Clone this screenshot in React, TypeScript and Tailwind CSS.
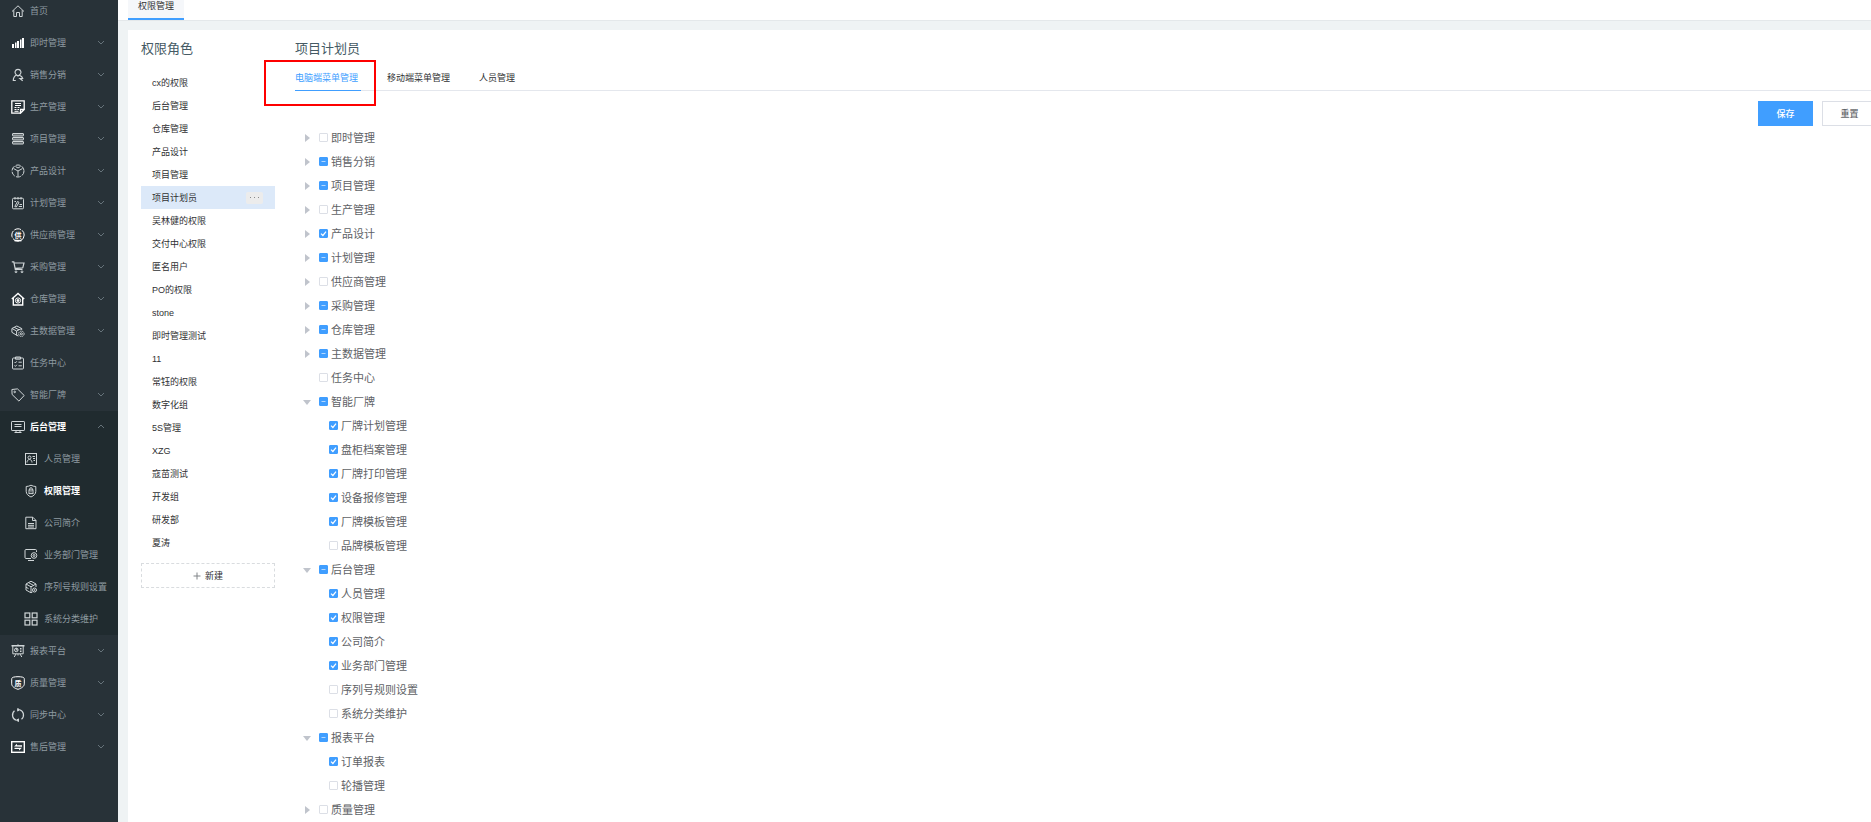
import { useEffect, useRef, useState, type ReactNode } from "react";

type IconName =
  | "home" | "bars" | "person" | "production" | "server" | "cube" | "plan" | "supplier"
  | "cart" | "warehouse" | "data" | "task" | "tag" | "monitor" | "idcard" | "shield"
  | "doc" | "dept" | "serial" | "grid" | "board" | "quality" | "sync" | "service";

const drawings: Record<IconName, ReactNode> = {
  home: (
    <path d="M1 7.500 7 1.800l6 5.700M2.800 6.200V12.500h2.700V8.500h3v4h2.700V6.200" />
  ),
  bars: (
    <g fill="currentColor" stroke="none">
      <rect x="1" y="8" width="2" height="4" />
      <rect x="4" y="6.500" width="1.500" height="5.500" />
      <rect x="6" y="5" width="2" height="7" />
      <rect x="9" y="3.500" width="1.500" height="8.500" />
      <rect x="11" y="2" width="2" height="10" />
    </g>
  ),
  person: (
    <path strokeWidth="1.200" d="M7 1.300a3 3 0 0 1 1.800 5.400L7 8 5.200 6.700A3 3 0 0 1 7 1.300ZM5.500 7C3.500 8 2.300 9.800 2.300 12.500h2.500M8.600 7.200c1.600.8 2.700 1.800 3.100 3.300H9l2.700 2.200" />
  ),
  production: (
    <>
      <path strokeWidth="1.300" d="M13.200 9V.8H.8v12.400H9M13.200 9.500 9.500 13.200V9.500Z" />
      <path d="M4 3.500h6M4 5.500h6M3.500 7.500h2M6.500 7.500h2M3.500 9.500h2M6.500 9.500h1.500M3.500 11.300h4" />
    </>
  ),
  server: (
    <>
      <g fill="currentColor" fillOpacity=".35">
        <rect x="1.500" y="1.500" width="11" height="2.500" rx=".5" />
        <rect x="1.500" y="5.500" width="11" height="2.500" rx=".5" />
        <rect x="1.500" y="9.500" width="11" height="2.500" rx=".5" />
      </g>
    </>
  ),
  cube: (
    <>
      <circle cx="7" cy="7" r="6" strokeDasharray="5 1.300" />
      <path d="M7 7v5.500M7 7 2.500 4.500M7 7l4.500-2.500M4.500 2.500 7 4l2.500-1.500" />
    </>
  ),
  plan: (
    <>
      <rect x="1.500" y="2.300" width="11" height="10.500" rx="1" />
      <path d="M4 1v2.500M7 1v2.500M10 1v2.500M3.800 10.500 6.500 5.500 8 6.300 5.300 11ZM8.500 8.500h2.500M7.800 10.500H11M3.500 5.500h1.500" />
    </>
  ),
  supplier: (
    <>
      <circle cx="7" cy="7" r="6.200" strokeDasharray="7 1.200" />
      <path strokeWidth="1.500" d="M3.500 12.600h7" />
      <text x="7" y="9.500" textAnchor="middle" fontSize="7" fontWeight="700" fill="currentColor" stroke="none">供</text>
    </>
  ),
  cart: (
    <>
      <path strokeWidth="1.200" d="M.8 1.800h2l1.500 7.500h7.200M3.200 3h9.800l-1.200 4.800-8 .6" />
      <circle cx="5" cy="11.800" r=".9" />
      <circle cx="11" cy="11.800" r=".9" />
    </>
  ),
  warehouse: (
    <>
      <path strokeWidth="1.400" d="M.8 7 7 1.500 13.200 7M2.300 6v7h9.400V6" />
      <circle cx="7" cy="8.500" r="2.600" />
      <circle cx="7" cy="8.500" r="1" fill="currentColor" />
    </>
  ),
  data: (
    <>
      <path d="M7.500 12 5.500 11.200.9 8.300V4.500L5.800 2l4.900 2.500V6M1 4.500 5.600 7l5-2.500M5.600 7v4.500M3.200 3.300 8 5.800" />
      <circle cx="10.400" cy="9.800" r="2.700" strokeDasharray="1.600 .6" />
      <circle cx="10.400" cy="9.800" r="1" />
    </>
  ),
  task: (
    <>
      <rect x="1.500" y="2" width="11" height="11" rx="1" />
      <path d="M4.500 1v2.200h5V1ZM3.500 6l.9.900L5.800 5.300M7.500 6.200h3.300M3.500 9.500l.9.900 1.400-1.600M7.500 9.800h3.300" />
    </>
  ),
  tag: (
    <>
      <path d="M.9 1.500 6.500.9l6.700 6.600-5.300 5.600L1.100 6.500Z" />
      <circle cx="3.700" cy="3.900" r=".8" />
    </>
  ),
  monitor: (
    <>
      <rect x=".5" y="1.500" width="13" height="9" rx=".6" />
      <path d="M3.500 4.500h7M3.500 6.500h7M5 10.500v2M9 10.500v2M3.500 12.500h7" />
    </>
  ),
  idcard: (
    <>
      <rect x="1.500" y="1.500" width="11" height="11" />
      <circle cx="5.500" cy="5.500" r="1.500" />
      <path d="M3 10.500c0-4 5-4 5 0M8.500 4.500h2.500M9 6.500h2M9.500 8.500h1.500" />
    </>
  ),
  shield: (
    <>
      <path d="M7 1.200c1.500.9 3 1.200 4.800 1.300v4.800c0 2.700-2 4.500-4.800 5.700-2.800-1.200-4.800-3-4.800-5.700V2.500C4 2.400 5.500 2.100 7 1.200Z" />
      <rect x="5" y="6" width="4" height="3.600" />
      <path d="M5.700 6V5c0-1.800 2.600-1.800 2.600 0v1M7 7.200v1.200" />
    </>
  ),
  doc: (
    <path d="M1.800 1.200h7l3.200 3.200v8.300H1.800ZM8.500 1.200v3.300h3.500M4 7.500h6M4 9.300h6M4 11h6" />
  ),
  dept: (
    <>
      <path d="M7 10.500H2c-.6 0-1-.4-1-1V2.500c0-.6.4-1 1-1h9.500c.6 0 1 .4 1 1V4M4 12.500h6" />
      <circle cx="10" cy="7.500" r="2.800" />
      <circle cx="10" cy="7.500" r="1" />
    </>
  ),
  serial: (
    <>
      <path d="M7 1.200 12 4v3M7 1.200 2 4v6l5 2.800 1.500-.8M2 4l5 2.800L12 4M7 6.800v5.500M4.500 2.600 9.500 5.400M2 7.200l2.500 1.400" />
      <circle cx="10.500" cy="10" r="2" />
      <circle cx="10.500" cy="10" r=".5" />
    </>
  ),
  grid: (
    <g strokeWidth="1.200">
      <rect x="1" y="1" width="4.800" height="4.800" />
      <rect x="8.200" y="1" width="4.800" height="4.800" />
      <rect x="1" y="8.200" width="4.800" height="4.800" />
      <rect x="8.200" y="8.200" width="4.800" height="4.800" />
    </g>
  ),
  board: (
    <>
      <path strokeWidth="1.400" d="M.5 1.800h13M7 .5v1" />
      <path d="M1.800 2v7.800h10.400V2M5 10l-1.800 3M9 10l1.800 3M7 10v1.500" />
      <circle cx="5.300" cy="5.900" r="1.800" />
      <path d="M5.300 4v2H7M9 4.500h1.500M9 6h1.500M9 7.500h1.500" />
    </>
  ),
  quality: (
    <>
      <path d="M2.300 1.200C5 .5 9 .5 11.700 1.200c1.200.3 1.600 1 1.600 2v4.600c0 2.700-3 4.600-6.300 5.500C3.700 12.400.7 10.500.7 7.800V3.200c0-1 .4-1.700 1.600-2Z" />
      <text x="7" y="9.500" textAnchor="middle" fontSize="7" fontWeight="700" fill="currentColor" stroke="none">质</text>
    </>
  ),
  sync: (
    <>
      <path strokeWidth="1.200" d="M5.300 12.300A5.600 5.600 0 0 1 3.500 2.700M8.700 1.700a5.600 5.600 0 0 1 1.800 9.600" />
      <path fill="currentColor" d="M6.700.5v2.600L8.600 1.800ZM7.500 10.900v2.600L5.500 12.200Z" />
    </>
  ),
  service: (
    <>
      <rect x=".7" y="1.700" width="12.600" height="10.600" strokeWidth="1.400" />
      <path fill="currentColor" stroke="none" d="M3 6.500 6 3.700v1.500h5v1.500ZM11 7.700 8 10.500V9H3.500V7.700Z" />
    </>
  ),
};

function Icon({ name, bright }: { name: IconName; bright?: boolean }) {
  return (
    <svg
      viewBox="0 0 14 14"
      aria-hidden="true"
      fill="none"
      stroke="currentColor"
      strokeWidth="1"
      className={bright ? "size-3.5 shrink-0 text-white" : "size-3.5 shrink-0 text-[#d0d6d8]"}
    >
      {drawings[name]}
    </svg>
  );
}

function Chevron({ up }: { up?: boolean }) {
  return (
    <svg viewBox="0 0 8 8" aria-hidden="true" fill="none" stroke="currentColor" className="ml-auto size-2 text-[#66737a]">
      <path d={up ? "M1 5 4 2l3 3" : "M1 2 4 5l3-3"} />
    </svg>
  );
}

type MenuItem = { label: string; icon: IconName; bright?: boolean; leaf?: boolean; children?: MenuItem[] };

const menu: MenuItem[] = [
  { label: "首页", icon: "home", leaf: true },
  { label: "即时管理", icon: "bars", bright: true },
  { label: "销售分销", icon: "person" },
  { label: "生产管理", icon: "production", bright: true },
  { label: "项目管理", icon: "server" },
  { label: "产品设计", icon: "cube" },
  { label: "计划管理", icon: "plan" },
  { label: "供应商管理", icon: "supplier", bright: true },
  { label: "采购管理", icon: "cart" },
  { label: "仓库管理", icon: "warehouse", bright: true },
  { label: "主数据管理", icon: "data" },
  { label: "任务中心", icon: "task", leaf: true },
  { label: "智能厂牌", icon: "tag" },
  {
    label: "后台管理",
    icon: "monitor",
    children: [
      { label: "人员管理", icon: "idcard" },
      { label: "权限管理", icon: "shield" },
      { label: "公司简介", icon: "doc" },
      { label: "业务部门管理", icon: "dept" },
      { label: "序列号规则设置", icon: "serial" },
      { label: "系统分类维护", icon: "grid" },
    ],
  },
  { label: "报表平台", icon: "board" },
  { label: "质量管理", icon: "quality", bright: true },
  { label: "同步中心", icon: "sync" },
  { label: "售后管理", icon: "service", bright: true },
];

const roles = [
  "cx的权限", "后台管理", "仓库管理", "产品设计", "项目管理", "项目计划员", "吴林健的权限",
  "交付中心权限", "匿名用户", "PO的权限", "stone", "即时管理测试", "11", "常钰的权限", "数字化组",
  "5S管理", "XZG", "寇苗测试", "开发组", "研发部", "夏涛",
];

type Mark = "none" | "some" | "all";
type Node = { label: string; mark: Mark; leaf?: boolean; children?: { label: string; mark: Mark }[] };

const tree: Node[] = [
  { label: "即时管理", mark: "none" },
  { label: "销售分销", mark: "some" },
  { label: "项目管理", mark: "some" },
  { label: "生产管理", mark: "none" },
  { label: "产品设计", mark: "all" },
  { label: "计划管理", mark: "some" },
  { label: "供应商管理", mark: "none" },
  { label: "采购管理", mark: "some" },
  { label: "仓库管理", mark: "some" },
  { label: "主数据管理", mark: "some" },
  { label: "任务中心", mark: "none", leaf: true },
  {
    label: "智能厂牌",
    mark: "some",
    children: [
      { label: "厂牌计划管理", mark: "all" },
      { label: "盘柜档案管理", mark: "all" },
      { label: "厂牌打印管理", mark: "all" },
      { label: "设备报修管理", mark: "all" },
      { label: "厂牌模板管理", mark: "all" },
      { label: "品牌模板管理", mark: "none" },
    ],
  },
  {
    label: "后台管理",
    mark: "some",
    children: [
      { label: "人员管理", mark: "all" },
      { label: "权限管理", mark: "all" },
      { label: "公司简介", mark: "all" },
      { label: "业务部门管理", mark: "all" },
      { label: "序列号规则设置", mark: "none" },
      { label: "系统分类维护", mark: "none" },
    ],
  },
  {
    label: "报表平台",
    mark: "some",
    children: [
      { label: "订单报表", mark: "all" },
      { label: "轮播管理", mark: "none" },
    ],
  },
  { label: "质量管理", mark: "none" },
];

function Check({ label, mark }: { label: string; mark: Mark }) {
  const box = useRef<HTMLInputElement>(null);
  useEffect(() => {
    if (box.current) box.current.indeterminate = mark === "some";
  }, [mark]);
  return (
    <label className="flex cursor-pointer items-center gap-[3px] text-[11px] leading-6 text-[#606266]">
      <span className="mb-px grid size-[9px]">
        <input
          ref={box}
          type="checkbox"
          defaultChecked={mark === "all"}
          className="peer col-start-1 row-start-1 size-[9px] appearance-none rounded-[1px] border border-[#dcdfe6] bg-white checked:border-[#409eff] checked:bg-[#409eff] indeterminate:border-[#409eff] indeterminate:bg-[#409eff]"
        />
        <svg viewBox="0 0 9 9" aria-hidden="true" fill="none" stroke="white" strokeWidth="1.200" className="pointer-events-none col-start-1 row-start-1 hidden size-[9px] peer-checked:block">
          <path d="M2 4.600 3.900 6.500 7 2.700" />
        </svg>
        <svg viewBox="0 0 9 9" aria-hidden="true" fill="none" stroke="#b3d8ff" className="pointer-events-none col-start-1 row-start-1 hidden size-[9px] peer-indeterminate:block">
          <path d="M2.500 4.500h4" />
        </svg>
      </span>
      {label}
    </label>
  );
}

function TreeRow({ node }: { node: Node }) {
  const [open, setOpen] = useState(Boolean(node.children));
  return (
    <li>
      <div className="flex h-6 items-center">
        {node.leaf ? (
          <span className="w-6" />
        ) : (
          <button type="button" aria-label={node.label} aria-expanded={open} onClick={() => setOpen(!open)} className="flex w-6 pl-2">
            <svg viewBox="0 0 8 8" aria-hidden="true" fill="#c0c4cc" className="size-2">
              <path d={open ? "M0 2h8L4 7Z" : "M2 0v8l5-4Z"} />
            </svg>
          </button>
        )}
        <Check label={node.label} mark={node.mark} />
      </div>
      {open && node.children && (
        <ul>
          {node.children.map((child) => (
            <li key={child.label} className="flex h-6 items-center pl-[34px]">
              <Check label={child.label} mark={child.mark} />
            </li>
          ))}
        </ul>
      )}
    </li>
  );
}

function Sidebar() {
  return (
    <aside className="w-[118px] shrink-0 overflow-hidden bg-[#283238] text-[#8f9ba1]">
      <nav className="-mt-[5px]">
        <ul>
          {menu.map((item) => (
            <li key={item.label} className={item.children ? "bg-[#202b2f]" : ""}>
              <a
                href="#"
                className={
                  item.children
                    ? "flex h-8 items-center gap-[5px] pr-[13px] pl-[11px] font-bold whitespace-nowrap text-white"
                    : "flex h-8 items-center gap-[5px] pr-[13px] pl-[11px] whitespace-nowrap"
                }
              >
                <Icon name={item.icon} bright={item.bright} />
                {item.label}
                {!item.leaf && <Chevron up={Boolean(item.children)} />}
              </a>
              {item.children && (
                <ul>
                  {item.children.map((sub) => (
                    <li key={sub.label}>
                      <a
                        href="#"
                        className={
                          sub.label === "权限管理"
                            ? "flex h-8 items-center gap-1.5 pl-6 font-bold whitespace-nowrap text-white"
                            : "flex h-8 items-center gap-1.5 pl-6 whitespace-nowrap"
                        }
                      >
                        <Icon name={sub.icon} />
                        {sub.label}
                      </a>
                    </li>
                  ))}
                </ul>
              )}
            </li>
          ))}
        </ul>
      </nav>
    </aside>
  );
}

export default function App() {
  const [role, setRole] = useState("项目计划员");
  const [tab, setTab] = useState("电脑端菜单管理");
  return (
    <div className="flex h-screen overflow-hidden bg-[#eff3f4] font-['Liberation_Sans','Noto_Sans_CJK_SC',sans-serif] text-[9px] leading-3 text-[#303133]">
      <Sidebar />
      <div className="flex min-w-0 flex-1 flex-col">
        <header className="flex border-b border-[#e4e8ea] bg-white pl-2.5">
          <button type="button" className="border-b-2 border-[#409eff] bg-[#f5f7fa] px-2.5 pb-1.5">
            权限管理
          </button>
        </header>
        <main className="mt-[9px] ml-2.5 flex min-h-0 flex-1 gap-5 bg-white pt-[9px] pl-[13px]">
          <section className="w-[134px] shrink-0">
            <h2 className="text-[13px] leading-5 text-[#455a64]">权限角色</h2>
            <ul className="mt-3">
              {roles.map((name) => (
                <li key={name} className={name === role ? "flex h-[23px] items-center bg-[#dce9f9] pr-3" : "flex h-[23px] items-center pr-3"}>
                  <button type="button" onClick={() => setRole(name)} className="h-full flex-1 pl-[11px] text-left">
                    {name}
                  </button>
                  {name === role && (
                    <button type="button" aria-label="更多" className="flex h-3 w-[17px] items-center justify-center rounded-xs bg-[#ececec]">
                      <svg viewBox="0 0 11 3" aria-hidden="true" fill="#8a8a8a" className="h-[3px] w-[11px]">
                        <rect x="1" y="1" width="1" height="1" />
                        <rect x="5" y="1" width="1" height="1" />
                        <rect x="9" y="1" width="1" height="1" />
                      </svg>
                    </button>
                  )}
                </li>
              ))}
            </ul>
            <button type="button" className="mt-[9px] flex h-[25px] w-full items-center justify-center gap-1 border border-dashed border-[#d9dcdf]">
              <svg viewBox="0 0 8 8" aria-hidden="true" stroke="#808488" className="size-2">
                <path d="M4 .500v7M.500 4h7" />
              </svg>
              新建
            </button>
          </section>
          <section className="min-w-0 flex-1">
            <h2 className="text-[13px] leading-5 text-[#455a64]">项目计划员</h2>
            <div className="relative">
              <div role="tablist" className="mt-[7px] flex gap-[26px] border-b border-[#e4e7ed]">
                {["电脑端菜单管理", "移动端菜单管理", "人员管理"].map((name) => (
                  <button
                    key={name}
                    type="button"
                    role="tab"
                    aria-selected={name === tab}
                    onClick={() => setTab(name)}
                    className={
                      name === tab
                        ? "-mb-px min-w-[66px] border-b border-[#409eff] text-left leading-6 text-[#409eff]"
                        : "-mb-px min-w-[66px] border-b border-transparent text-left leading-6"
                    }
                  >
                    {name}
                  </button>
                ))}
              </div>
              <div className="pointer-events-none absolute -top-1.5 -left-[31px] h-[46px] w-28 border-2 border-[#fe0000]" />
            </div>
            <div className="mt-2.5 -mr-1.5 flex justify-end gap-[9px]">
              <button type="button" className="h-[25px] w-[55px] bg-[#409eff] font-medium text-white">
                保存
              </button>
              <button type="button" className="h-[25px] w-[55px] border border-[#dcdfe6] bg-white font-medium text-[#606266]">
                重置
              </button>
            </div>
            <ul>
              {tree.map((node) => (
                <TreeRow key={node.label} node={node} />
              ))}
            </ul>
          </section>
        </main>
      </div>
    </div>
  );
}
